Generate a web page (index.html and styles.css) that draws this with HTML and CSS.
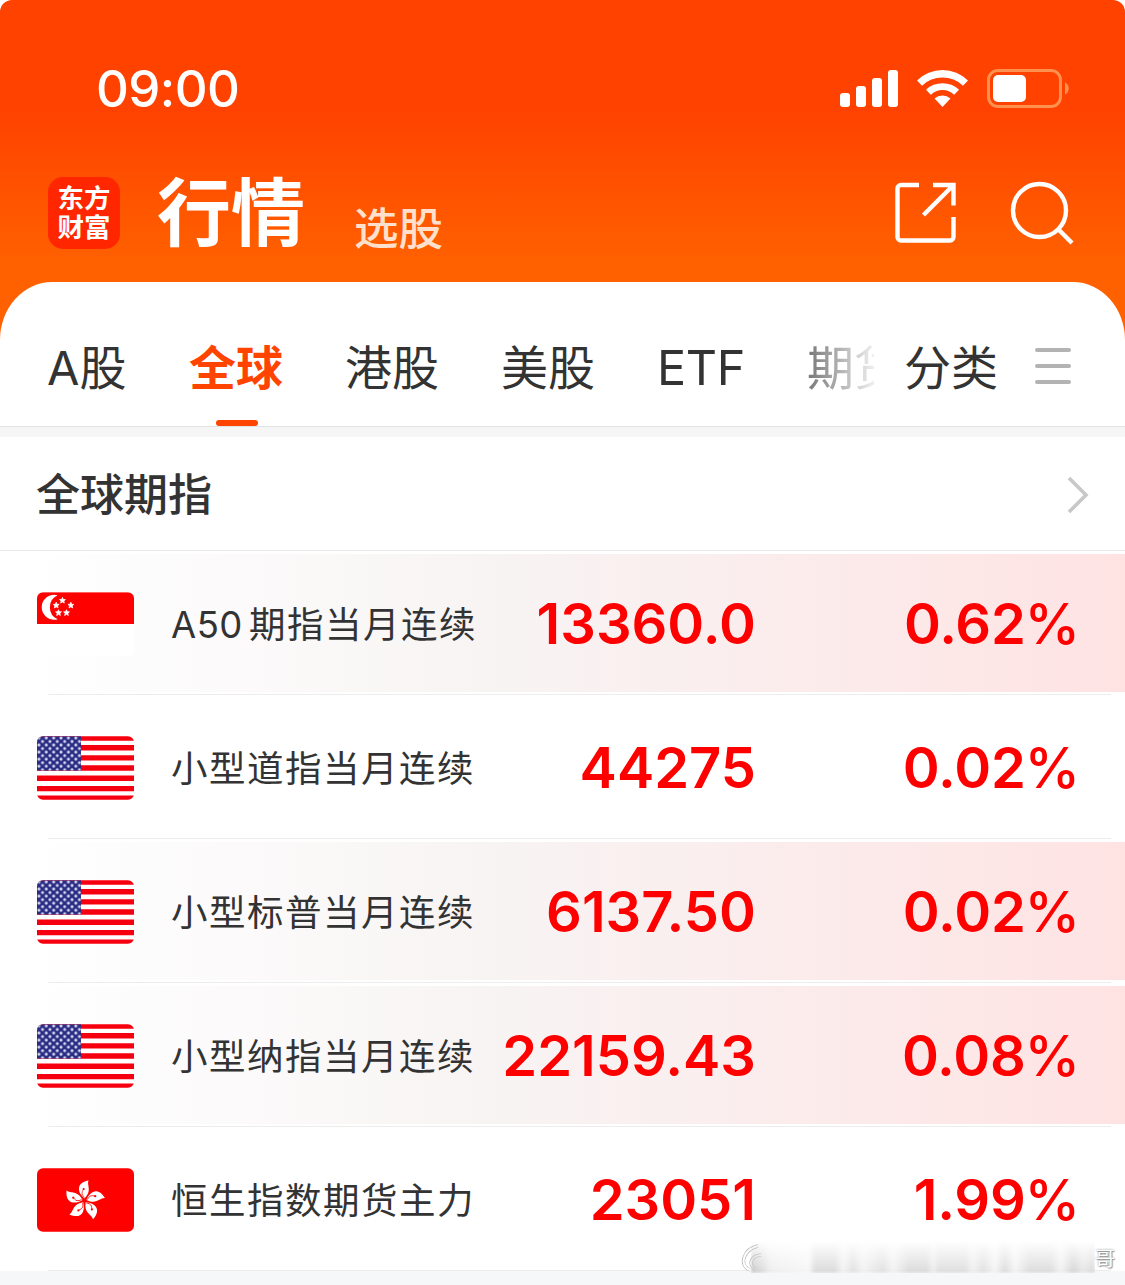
FILE: index.html
```html
<!DOCTYPE html>
<html lang="zh-CN">
<head>
    <meta charset="UTF-8">
    <meta name="viewport" content="width=device-width, initial-scale=1.0">
    <title>行情</title>
    <link rel="stylesheet" href="styles.css">
</head>
<body>
    <!-- Flags shared by the rows -->
    <svg class="sprite" width="0" height="0">
        <defs>
            <clipPath id="flag-clip"><rect width="96" height="63" rx="6"/></clipPath>
            <pattern id="stars" width="7.3" height="7" patternUnits="userSpaceOnUse">
                <circle cx="1.9" cy="1.8" r="1.5" fill="#d5d7ef"/>
                <circle cx="5.5" cy="5.3" r="1.5" fill="#d5d7ef"/>
            </pattern>
        </defs>
        <symbol id="flag-us" viewBox="0 0 96 63">
            <g clip-path="url(#flag-clip)">
                <rect width="96" height="63" fill="#fff"/>
                <path d="M0 1.8h96M0 11.5h96M0 21.5h96M0 31.5h96M0 41.7h96M0 51.9h96M0 61.5h96" stroke="#f6000f" stroke-width="5.4"/>
                <rect width="43.5" height="34" fill="#2b2d84"/>
                <rect width="43.5" height="34" fill="url(#stars)"/>
            </g>
        </symbol>
        <symbol id="flag-sg" viewBox="0 0 96 63">
            <g clip-path="url(#flag-clip)">
                <rect width="96" height="63" fill="#fff"/>
                <rect width="96" height="31.5" fill="#fe0000"/>
                <path d="M20.5 3A12.4 12.4 0 1 0 20.5 26.8A13 13 0 0 1 20.5 3Z" fill="#fff"/>
                <g fill="#fff">
                    <path id="star" d="M25.2 5.2l.8 2 2.1.1-1.6 1.4.5 2.1-1.8-1.1-1.8 1.1.5-2.1-1.6-1.4 2.1-.1z" stroke="#fff" stroke-width=".8"/>
                    <use href="#star" x="-6.2" y="4.8"/>
                    <use href="#star" x="8.3" y="4.8"/>
                    <use href="#star" x="-3.9" y="12.2"/>
                    <use href="#star" x="4" y="12.2"/>
                </g>
            </g>
        </symbol>
        <symbol id="flag-hk" viewBox="0 0 96 63">
            <rect width="96" height="63" rx="6" fill="#fe0000"/>
            <g transform="translate(47 32)">
                <g id="petal">
                    <path d="M0-2C-7-8-9-17 4-20C2-15 8-10 0-2Z" fill="#fff"/>
                    <path d="M0-3C-3-6-3-8-1-11" fill="none" stroke="#fe0000" stroke-width=".8"/>
                    <circle cx="-.8" cy="-11.4" r="1.1" fill="#fe0000"/>
                </g>
                <use href="#petal" transform="rotate(72)"/>
                <use href="#petal" transform="rotate(144)"/>
                <use href="#petal" transform="rotate(216)"/>
                <use href="#petal" transform="rotate(288)"/>
            </g>
        </symbol>
    </svg>

    <div class="app">
        <header class="header">
            <div class="status-bar">
                <span class="time">09:00</span>
                <svg class="status-icons" width="230" height="40" viewBox="0 0 230 40" fill="#fff">
                    <rect x="0" y="24" width="10" height="14" rx="3"/>
                    <rect x="16" y="17" width="10" height="21" rx="3"/>
                    <rect x="32" y="9" width="10" height="29" rx="3"/>
                    <rect x="48" y="1" width="10" height="37" rx="3"/>
                    <path d="M77 11.5a36.5 36.5 0 0 1 51 0l-5 5.2a29.5 29.5 0 0 0-41 0z"/>
                    <path d="M86 20.7a24 24 0 0 1 33 0l-4.8 5a17 17 0 0 0-23.4 0z"/>
                    <path d="M94.5 29.5a12 12 0 0 1 16 0l-8 8.5z"/>
                    <rect x="148.5" y="1.5" width="72" height="36" rx="9.5" fill="none" stroke="#ff9150" stroke-width="3"/>
                    <rect x="153" y="6" width="33" height="27" rx="5"/>
                    <path d="M225 13.5c5 2 5 10 0 12z" fill="#ff9150"/>
                </svg>
            </div>
            <div class="title-bar">
                <div class="logo">东方<br>财富</div>
                <h1>行情</h1>
                <span class="sub-title">选股</span>
                <svg class="share-icon" width="64" height="64" viewBox="0 0 64 64" fill="none" stroke="#fff" stroke-width="4.4">
                    <path d="M25 5H7a3.5 3.5 0 0 0-3.5 3.5V57a3.5 3.5 0 0 0 3.5 3.5h49A3.5 3.5 0 0 0 59.5 57V37"/>
                    <path d="M39 5H59.5V25.5M59 5.5L29.500 35"/>
                </svg>
                <svg class="search-icon" width="66" height="66" viewBox="0 0 66 66" fill="none" stroke="#fff" stroke-width="4.4">
                    <circle cx="30.5" cy="30.5" r="26.5"/>
                    <path d="M49 49L63 63"/>
                </svg>
            </div>
        </header>

        <main class="panel">
            <nav class="tabs">
                <div class="tab-list">
                    <a class="tab">A股</a>
                    <a class="tab active">全球</a>
                    <a class="tab">港股</a>
                    <a class="tab">美股</a>
                    <a class="tab etf">ETF</a>
                    <a class="tab fading">期货</a>
                </div>
                <a class="tab">分类</a>
                <div class="menu"><i></i><i></i><i></i></div>
            </nav>

            <section class="section-title">
                <h2>全球期指</h2>
                <svg width="24" height="40" viewBox="0 0 24 40" fill="none" stroke="#c8c8c8" stroke-width="3.6">
                    <path d="M3 3L20 20L3 37"/>
                </svg>
            </section>

            <ul class="quotes">
                <li class="row tinted">
                    <svg class="flag"><use href="#flag-sg"/></svg>
                    <span class="name"><span class="latin">A50</span>期指当月连续</span>
                    <span class="price">13360.0</span>
                    <span class="change">0.62<span class="unit">%</span></span>
                </li>
                <li class="row">
                    <svg class="flag"><use href="#flag-us"/></svg>
                    <span class="name">小型道指当月连续</span>
                    <span class="price">44275</span>
                    <span class="change">0.02<span class="unit">%</span></span>
                </li>
                <li class="row tinted">
                    <svg class="flag"><use href="#flag-us"/></svg>
                    <span class="name">小型标普当月连续</span>
                    <span class="price">6137.50</span>
                    <span class="change">0.02<span class="unit">%</span></span>
                </li>
                <li class="row tinted">
                    <svg class="flag"><use href="#flag-us"/></svg>
                    <span class="name">小型纳指当月连续</span>
                    <span class="price">22159.43</span>
                    <span class="change">0.08<span class="unit">%</span></span>
                </li>
                <li class="row">
                    <svg class="flag"><use href="#flag-hk"/></svg>
                    <span class="name">恒生指数期货主力</span>
                    <span class="price">23051</span>
                    <span class="change">1.99<span class="unit">%</span></span>
                </li>
            </ul>
        </main>

        <div class="watermark">
            <svg width="24" height="34" viewBox="0 0 24 34" fill="none">
                <path d="M17 6C3 9-3 25 9 30M20 15C9 16 7 26 15 29" stroke="#bbb" stroke-width="3.5"/>
                <path d="M17 6C3 9-3 25 9 30M20 15C9 16 7 26 15 29" stroke="#fff" stroke-width="2"/>
            </svg>
            <div class="smudge"></div>
            <span>哥</span>
        </div>
    </div>
</body>
</html>
```

FILE: styles.css
```css
* {
    box-sizing: border-box;
}

body {
    margin: 0;
    background-color: #fff;
    color: #333;
    font-family: Inter, "Noto Sans CJK SC", sans-serif;
}

h1, h2, ul {
    margin: 0;
    padding: 0;
}

.sprite {
    position: absolute;
}

.app {
    position: relative;
    width: 1125px;
    height: 1285px;
    overflow: hidden;
    border-radius: 12px 12px 0 0;
    background-color: #f6f7f9;
}

/* Header */
.header {
    height: 342px;
    padding-top: 60px;
    background: linear-gradient(#ff4200 0, #ff4200 110px, #ff6000 260px);
    color: #fff;
}

.status-bar {
    display: flex;
    justify-content: space-between;
    align-items: center;
    height: 58px;
    padding: 0 55px 0 96px;
}

.time {
    font-size: 51px;
    font-weight: 500;
    line-height: 58px;
    letter-spacing: -0.6px;
}

.title-bar {
    display: flex;
    align-items: center;
    height: 72px;
    margin-top: 59px;
    padding: 0 50px 0 48px;
}

.logo {
    width: 72px;
    height: 72px;
    padding-top: 7px;
    border-radius: 15px;
    background-color: #ff2600;
    font-size: 26.5px;
    font-weight: 700;
    line-height: 29px;
    text-align: center;
}

.title-bar h1 {
    margin-left: 37px;
    font-size: 74px;
    font-weight: 700;
    line-height: 72px;
}

.sub-title {
    margin: 31px 0 0 49px;
    color: #ffe0cc;
    font-size: 44.5px;
    font-weight: 500;
    line-height: 44px;
}

.share-icon {
    margin: 0 0 2px auto;
}

.search-icon {
    margin-left: 51px;
}

/* Tabs */
.panel {
    margin-top: -60px;
    border-radius: 52px 52px 0 0 / 58px 58px 0 0;
    background-color: #fff;
}

.tabs {
    display: flex;
    align-items: center;
    height: 145px;
    padding: 25px 54px 0 47px;
    border-bottom: 1px solid #e2e2e2;
}

.tab-list {
    display: flex;
    gap: 62px;
    width: 827px;
    overflow: hidden;
}

.tab {
    flex: none;
    position: relative;
    height: 119px;
    font-size: 47px;
    line-height: 122px;
    white-space: nowrap;
}

.tab-list .tab:first-child {
    width: 80px;
}

.tab-list + .tab {
    margin-left: 30px;
}

.tab.active {
    color: #ff4400;
    font-weight: 700;
}

.tab.active::after {
    content: "";
    position: absolute;
    left: 27px;
    bottom: 0;
    width: 42px;
    height: 6px;
    border-radius: 3px;
    background-color: #ff4400;
}

.tab.etf {
    width: 88px;
    font-size: 48.5px;
    letter-spacing: -0.3px;
}

.tab.fading {
    background: linear-gradient(to right, #777 0, #fff 76px);
    background-clip: text;
    color: transparent;
}

.menu {
    display: flex;
    flex-direction: column;
    gap: 12px;
    margin: 0 0 2px auto;
}

.menu i {
    width: 36px;
    height: 4px;
    border-radius: 2px;
    background-color: #b3b3b3;
}

.section-title {
    display: flex;
    align-items: center;
    justify-content: space-between;
    height: 124px;
    padding: 3px 35px 0 36px;
    border-top: 10px solid #f6f6f6;
    border-bottom: 1px solid #eaeaea;
}

.section-title h2 {
    font-size: 44px;
    font-weight: 500;
    line-height: 60px;
}

/* Quotes */
.quotes {
    list-style: none;
}

.row {
    position: relative;
    display: flex;
    align-items: center;
    height: 144px;
    padding: 4px 49px 2px 37px;
}

.row.tinted {
    background: linear-gradient(to right, #fff 30px, #f8f4f4 480px, #ffe3e3 1125px) 0 3px / 100% 138px no-repeat;
}

.row::after {
    content: "";
    position: absolute;
    left: 48px;
    right: 14px;
    bottom: 0;
    height: 1px;
    background-color: #ececec;
}

.flag {
    width: 97px;
    height: 64px;
}

.name {
    width: 320px;
    margin: 0 0 3px 37px;
    font-size: 36.5px;
    letter-spacing: 1.5px;
    white-space: nowrap;
}

.latin {
    margin-right: 6px;
    letter-spacing: 0.5px;
}

.price,
.change {
    color: #fe0000;
    font-size: 56px;
    font-weight: 600;
    text-align: right;
}

.price {
    width: 265px;
}

.change {
    flex: 1;
    margin-right: -4px;
    letter-spacing: -0.2px;
}

.unit {
    margin-left: -1px;
    font-weight: 500;
}

/* Watermark */
.watermark {
    position: absolute;
    right: 10px;
    bottom: 10px;
    display: flex;
    align-items: center;
    height: 36px;
    color: #fff;
    font-size: 20px;
    text-shadow: 0 0 2px #888, 1px 1px 1px #999;
}

.smudge {
    width: 344px;
    height: 32px;
    margin-left: -14px;
    background: linear-gradient(to right, #c8c8c8 0, #ddd 12px, #eee 20px, #f6f6f6 58px, #dadada 64px, #dadada 84px, #f2f2f2 92px, #dfdfdf 102px, #f2f2f2 112px, #dfdfdf 132px, #f2f2f2 142px, #dadada 158px, #dadada 176px, #ededed 182px, #dedede 188px, #dedede 214px, #efefef 222px, #dfdfdf 232px, #f4f4f4 244px, #dadada 254px, #f4f4f4 264px, #dcdcdc 278px, #dcdcdc 300px, #f2f2f2 310px, #d4d4d4 322px, #e6e6e6 332px, #d8d8d8 344px);
    filter: blur(1.5px);
    mask-image: linear-gradient(transparent, #000);
}
```
